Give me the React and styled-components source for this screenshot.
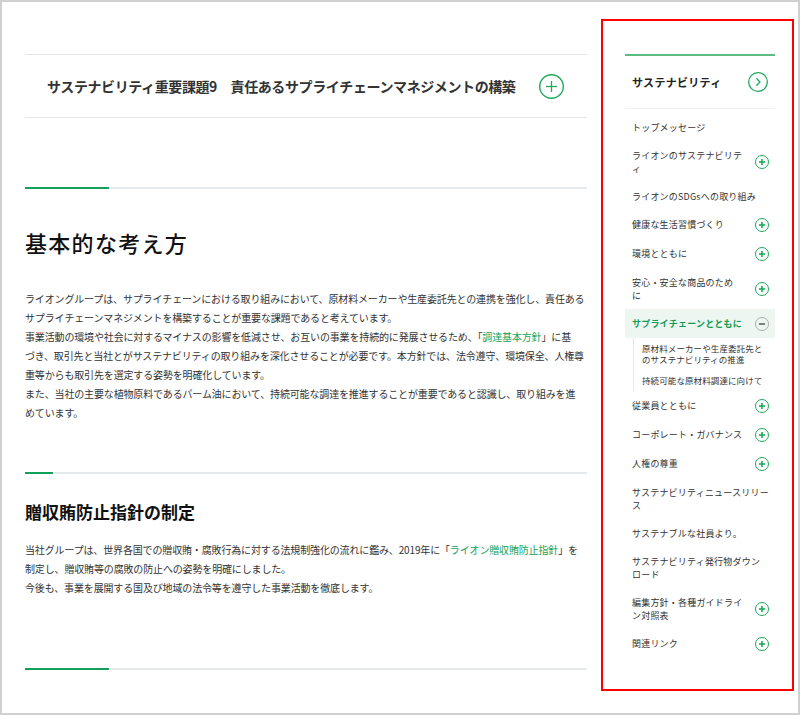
import React from 'react';
import styled, { createGlobalStyle } from 'styled-components';

const GlobalStyle = createGlobalStyle`
  html, body {
    margin: 0;
    padding: 0;
    background: #fff;
  }
  body {
    font-family: "Noto Sans CJK JP", "Noto Sans", sans-serif;
    color: #333;
  }
`;

const Frame = styled.div`
  box-sizing: border-box;
  width: 800px;
  height: 715px;
  border: 2px solid #d0d0d0;
  padding: 17px 4px 0 23px;
  display: flex;
  align-items: flex-start;
  gap: 14px;
  overflow: hidden;
`;

const Main = styled.main`
  width: 562px;
  flex: none;
  padding-top: 35px;
`;

const Accordion = styled.div`
  height: 62px;
  border-top: 1px solid #e3e6e8;
  border-bottom: 1px solid #e3e6e8;
  display: flex;
  align-items: center;
  justify-content: space-between;
  padding: 0 23px 0 22px;
`;

const AccordionTitle = styled.div`
  font-size: 14px;
  font-weight: 700;
  color: #333;
  letter-spacing: -0.4px;
  white-space: nowrap;
`;

const Section = styled.section`
  margin-top: ${(p) => p.gap}px;
`;

const Bar = styled.div`
  position: relative;
  height: 2px;
  background: #e6e9eb;

  &::before {
    content: '';
    position: absolute;
    left: 0;
    top: 0;
    height: 2px;
    width: ${(p) => p.accent}px;
    background: #12a05a;
  }
`;

const BigHeading = styled.h2`
  margin: 37px 0 0;
  font-size: 22px;
  line-height: 32px;
  font-weight: 500;
  letter-spacing: 1.3px;
  color: #111;
`;

const SubHeading = styled.h3`
  margin: 25px 0 0;
  font-size: 17px;
  line-height: 26px;
  font-weight: 700;
  color: #111;
`;

const Para = styled.p`
  margin: ${(p) => p.top}px 0 0;
  font-size: 10px;
  line-height: 19px;
  letter-spacing: -0.15px;
  color: #333;
  white-space: nowrap;
`;

const GreenLink = styled.span`
  color: #16a35a;
`;

const Sidebar = styled.aside`
  box-sizing: border-box;
  width: 193px;
  height: 672px;
  flex: none;
  border: 2px solid #ff0000;
  padding: 33px 17px 0 22px;
`;

const SideHead = styled.div`
  height: 52px;
  border-top: 2px solid #5cbc82;
  border-bottom: 1px solid #eeeeee;
  display: flex;
  align-items: center;
  justify-content: space-between;
  padding: 0 7px 0 7px;
`;

const SideTitle = styled.div`
  font-size: 11px;
  font-weight: 700;
  letter-spacing: 0.3px;
  color: #222;
`;

const Menu = styled.ul`
  list-style: none;
  margin: 0;
  padding: 4px 0 0;
`;

const Item = styled.li`
  display: flex;
  align-items: center;
  justify-content: space-between;
  padding: 7.5px 6px 7.5px 7px;
  background: ${(p) => (p.active ? '#eef6f1' : 'transparent')};
`;

const Label = styled.span`
  font-size: 9px;
  line-height: 13px;
  letter-spacing: 0.2px;
  white-space: nowrap;
  color: ${(p) => (p.active ? '#119c52' : '#333')};
  font-weight: ${(p) => (p.active ? 700 : 400)};
`;

const SubMenu = styled.ul`
  list-style: none;
  margin: 0 0 0 8px;
  padding: 0;
  border-left: 1px solid #e6e6e6;
`;

const SubItem = styled.li`
  padding: 5px 0 5px 8px;
  font-size: 8.5px;
  line-height: 11px;
  letter-spacing: 0.1px;
  white-space: nowrap;
  color: #333;
`;

const CircleIcon = ({ size, kind, color = '#1fa85c', stroke = 1.3, glyph = '#1fa85c', glyphWidth = 1.6 }) => {
  const c = size / 2;
  const r = c - stroke / 2;
  const a = size * 0.22;
  return (
    <svg width={size} height={size} viewBox={`0 0 ${size} ${size}`} style={{ flex: 'none' }}>
      <circle cx={c} cy={c} r={r} fill="none" stroke={color} strokeWidth={stroke} />
      {kind === 'chevron' ? (
        <path
          d={`M${c - size * 0.06} ${c - size * 0.16} L${c + size * 0.1} ${c} L${c - size * 0.06} ${c + size * 0.16}`}
          fill="none"
          stroke={glyph}
          strokeWidth={glyphWidth}
          strokeLinecap="round"
          strokeLinejoin="round"
        />
      ) : (
        <>
          <line x1={c - a} y1={c} x2={c + a} y2={c} stroke={glyph} strokeWidth={glyphWidth} />
          {kind === 'plus' && <line x1={c} y1={c - a} x2={c} y2={c + a} stroke={glyph} strokeWidth={glyphWidth} />}
        </>
      )}
    </svg>
  );
};

const menu = [
  { lines: ['トップメッセージ'] },
  { lines: ['ライオンのサステナビリテ', 'ィ'], plus: true },
  { lines: ['ライオンのSDGsへの取り組み'] },
  { lines: ['健康な生活習慣づくり'], plus: true },
  { lines: ['環境とともに'], plus: true },
  { lines: ['安心・安全な商品のため', 'に'], plus: true },
  {
    lines: ['サプライチェーンとともに'],
    active: true,
    children: [['原材料メーカーや生産委託先と', 'のサステナビリティの推進'], ['持続可能な原材料調達に向けて']],
  },
  { lines: ['従業員とともに'], plus: true },
  { lines: ['コーポレート・ガバナンス'], plus: true },
  { lines: ['人権の尊重'], plus: true },
  { lines: ['サステナビリティニュースリリー', 'ス'] },
  { lines: ['サステナブルな社員より。'] },
  { lines: ['サステナビリティ発行物ダウン', 'ロード'] },
  { lines: ['編集方針・各種ガイドライ', 'ン対照表'], plus: true },
  { lines: ['関連リンク'], plus: true },
];

const withBreaks = (lines) =>
  lines.map((l, i) => (
    <React.Fragment key={i}>
      {i > 0 && <br />}
      {l}
    </React.Fragment>
  ));

export default function App() {
  return (
    <>
      <GlobalStyle />
      <Frame>
        <Main>
          <Accordion>
            <AccordionTitle>サステナビリティ重要課題9　責任あるサプライチェーンマネジメントの構築</AccordionTitle>
            <CircleIcon size={25} kind="plus" stroke={1.4} glyphWidth={1.3} />
          </Accordion>

          <Section gap={69}>
            <Bar accent={84} />
            <BigHeading>基本的な考え方</BigHeading>
            <Para top={31}>
              ライオングループは、サプライチェーンにおける取り組みにおいて、原材料メーカーや生産委託先との連携を強化し、責任ある
              <br />
              サプライチェーンマネジメントを構築することが重要な課題であると考えています。
              <br />
              事業活動の環境や社会に対するマイナスの影響を低減させ、お互いの事業を持続的に発展させるため、「<GreenLink>調達基本方針</GreenLink>」に基
              <br />
              づき、取引先と当社とがサステナビリティの取り組みを深化させることが必要です。本方針では、法令遵守、環境保全、人権尊
              <br />
              重等からも取引先を選定する姿勢を明確化しています。
              <br />
              また、当社の主要な植物原料であるパーム油において、持続可能な調達を推進することが重要であると認識し、取り組みを進
              <br />
              めています。
            </Para>
          </Section>

          <Section gap={50}>
            <Bar accent={28} />
            <SubHeading>贈収賄防止指針の制定</SubHeading>
            <Para top={15}>
              当社グループは、世界各国での贈収賄・腐敗行為に対する法規制強化の流れに鑑み、2019年に「<GreenLink>ライオン贈収賄防止指針</GreenLink>」を
              <br />
              制定し、贈収賄等の腐敗の防止への姿勢を明確にしました。
              <br />
              今後も、事業を展開する国及び地域の法令等を遵守した事業活動を徹底します。
            </Para>
          </Section>

          <Section gap={71}>
            <Bar accent={84} />
          </Section>
        </Main>

        <Sidebar>
          <SideHead>
            <SideTitle>サステナビリティ</SideTitle>
            <CircleIcon size={20} kind="chevron" stroke={1.3} glyphWidth={1.3} />
          </SideHead>
          <Menu>
            {menu.map((m, i) => (
              <React.Fragment key={i}>
                <Item active={m.active}>
                  <Label active={m.active}>{withBreaks(m.lines)}</Label>
                  {m.plus && <CircleIcon size={14} kind="plus" stroke={1} glyphWidth={1.6} />}
                  {m.active && (
                    <CircleIcon size={14} kind="minus" color="#a8a8a8" stroke={0.9} glyph="#444" glyphWidth={1.3} />
                  )}
                </Item>
                {m.children && (
                  <SubMenu>
                    {m.children.map((c, j) => (
                      <SubItem key={j}>{withBreaks(c)}</SubItem>
                    ))}
                  </SubMenu>
                )}
              </React.Fragment>
            ))}
          </Menu>
        </Sidebar>
      </Frame>
    </>
  );
}
